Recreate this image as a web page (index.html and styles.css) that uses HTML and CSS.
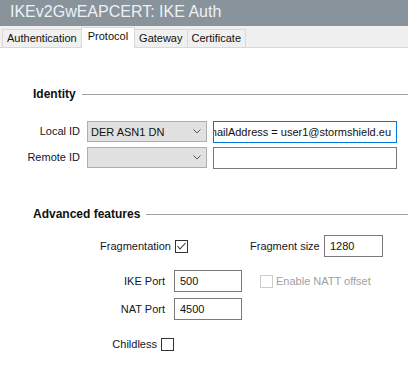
FILE: index.html
```html
<!DOCTYPE html>
<html>
<head>
<meta charset="utf-8">
<title>IKE Auth</title>
<link rel="stylesheet" href="styles.css">
</head>
<body>
<header class="titlebar">IKEv2GwEAPCERT: IKE Auth</header>
<nav class="tabs">
  <div class="tab">Authentication</div>
  <div class="tab active">Protocol</div>
  <div class="tab">Gateway</div>
  <div class="tab">Certificate</div>
</nav>
<main class="panel">
  <section class="group">
    <h2 class="group-title">Identity</h2>
    <div class="rows">
      <div class="id-row">
        <label class="id-label">Local ID</label>
        <div class="combo"><span>DER ASN1 DN</span><svg class="chev" width="8" height="5" viewBox="0 0 8 5"><polyline points="0.5,0.5 4,4 7.5,0.5" fill="none" stroke="#555" stroke-width="1"/></svg></div>
        <div class="field wide focused"><span>EmailAddress = user1@stormshield.eu</span></div>
      </div>
      <div class="id-row">
        <label class="id-label">Remote ID</label>
        <div class="combo"><span></span><svg class="chev" width="8" height="5" viewBox="0 0 8 5"><polyline points="0.5,0.5 4,4 7.5,0.5" fill="none" stroke="#555" stroke-width="1"/></svg></div>
        <div class="field wide"><span></span></div>
      </div>
    </div>
  </section>

  <section class="group advanced">
    <h2 class="group-title">Advanced features</h2>
    <div class="row frag-row">
      <label class="lbl lbl-frag">Fragmentation</label>
      <span class="check checked"><svg width="11" height="11" viewBox="0 0 11 11"><polyline points="1.5,5 4,8 9.5,2" fill="none" stroke="#333" stroke-width="1.1"/></svg></span>
      <label class="lbl-size">Fragment size</label>
      <div class="field small"><span>1280</span></div>
    </div>
    <div class="row ike-row">
      <label class="lbl lbl-port">IKE Port</label>
      <div class="field port"><span>500</span></div>
      <span class="check disabled"></span>
      <label class="lbl-disabled">Enable NATT offset</label>
    </div>
    <div class="row nat-row">
      <label class="lbl lbl-port">NAT Port</label>
      <div class="field port"><span>4500</span></div>
    </div>
    <div class="row child-row">
      <label class="lbl lbl-child">Childless</label>
      <span class="check"></span>
    </div>
  </section>
</main>
</body>
</html>
```

FILE: styles.css
```css
html, body {
  margin: 0;
  padding: 0;
}
body {
  width: 408px;
  height: 365px;
  overflow: hidden;
  background: #ffffff;
  font-family: "Liberation Sans", Arial, sans-serif;
  font-size: 11px;
  color: #15151f;
}

.titlebar {
  height: 26px;
  box-sizing: border-box;
  background: #88939c;
  color: #eef1f4;
  font-size: 16px;
  line-height: 23px;
  padding-left: 10px;
}

.tabs {
  display: flex;
  align-items: flex-end;
  height: 22px;
  box-sizing: border-box;
  background: #f0f0f0;
  border-bottom: 1px solid #d9d9d9;
  padding-left: 2px;
}
.tab {
  height: 18px;
  box-sizing: border-box;
  border: 1px solid #d9d9d9;
  border-bottom: 0;
  padding: 0 4px;
  line-height: 17px;
  margin-left: -1px;
  background: #f0f0f0;
  color: #111;
}
.tab:first-child {
  margin-left: 0;
}
.tab.active {
  height: 21px;
  margin-bottom: -1px;
  background: #ffffff;
  padding: 0 6px;
  line-height: 17px;
  position: relative;
  z-index: 1;
}

.panel {
  padding-top: 38px;
}

.group {
  display: flex;
  flex-direction: column;
}
.group-title {
  display: flex;
  align-items: center;
  gap: 6px;
  margin: 0 0 19px 33px;
  height: 16px;
  font-size: 12px;
  font-weight: bold;
  line-height: 16px;
  color: #111;
}
.group-title::after {
  content: "";
  flex: 1;
  border-top: 1px solid #a0a0a0;
}

.rows {
  display: flex;
  flex-direction: column;
  gap: 4px;
}
.id-row {
  display: flex;
  align-items: flex-start;
  height: 22px;
}
.id-label {
  width: 80px;
  margin-right: 7px;
  text-align: right;
  line-height: 21px;
}
.combo {
  width: 120px;
  height: 21px;
  box-sizing: border-box;
  border: 1px solid #adadad;
  background: #e1e1e1;
  display: flex;
  align-items: center;
  justify-content: space-between;
  padding: 0 5px 0 3px;
  margin-right: 6px;
  color: #111;
}
.chev {
  display: block;
}

.field {
  height: 22px;
  box-sizing: border-box;
  border: 1px solid #7a7a7a;
  background: #fff;
  display: flex;
  align-items: center;
  overflow: hidden;
  white-space: nowrap;
  padding-left: 5px;
  color: #111;
}
.field.wide {
  width: 184px;
  justify-content: flex-end;
  padding-left: 0;
  padding-right: 5px;
}
.field.focused {
  border-color: #0078d7;
}
.field span {
  flex: none;
}
.field.small {
  width: 59px;
}
.field.port {
  width: 68px;
}

.group.advanced {
  margin-top: 37px;
}
.advanced .group-title {
  margin-bottom: 13px;
}
.row {
  display: flex;
  align-items: center;
  height: 22px;
}
.ike-row {
  margin-top: 13px;
}
.nat-row {
  margin-top: 6px;
}
.child-row {
  margin-top: 13px;
}
.lbl {
  text-align: right;
  flex: none;
}
.lbl-frag {
  width: 171px;
  margin-right: 4px;
}
.lbl-port {
  width: 165px;
  margin-right: 9px;
}
.lbl-child {
  width: 157px;
  margin-right: 4px;
}
.lbl-size {
  width: 74px;
  margin-left: 62px;
  flex: none;
}
.check {
  width: 13px;
  height: 13px;
  box-sizing: border-box;
  border: 1px solid #333;
  background: #fff;
  display: flex;
  align-items: center;
  justify-content: center;
  flex: none;
}
.check.disabled {
  border-color: #cccccc;
  margin-left: 18px;
  margin-right: 3px;
}
.lbl-disabled {
  color: #a0a0a0;
}
```
